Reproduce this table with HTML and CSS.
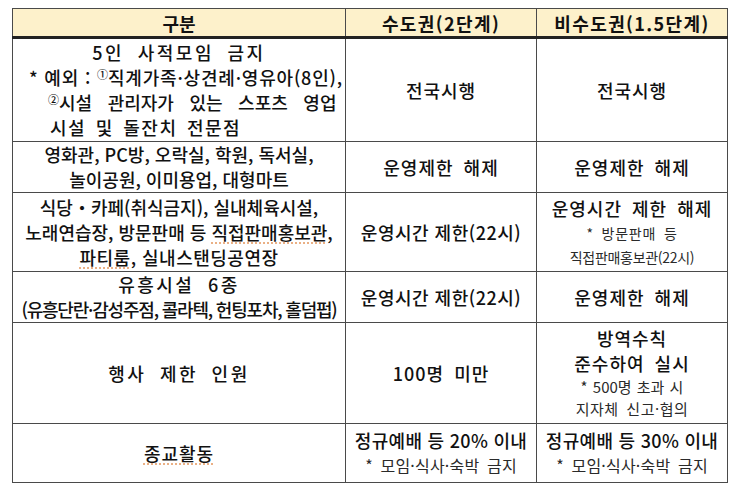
FILE: index.html
```html
<!DOCTYPE html>
<html lang="ko">
<head>
<meta charset="utf-8">
<link rel="stylesheet" href="styles.css">
</head>
<body>
<table class="rules">
  <colgroup>
    <col class="c1"><col class="c2"><col class="c3">
  </colgroup>
  <thead>
    <tr class="head">
      <th>구분</th>
      <th class="hw">수도권(2단계)</th>
      <th class="hw">비수도권(1.5단계)</th>
    </tr>
  </thead>
  <tbody>
    <tr class="r1">
      <td class="left">
        <div class="ln sp center">5인 사적모임 금지</div>
        <div class="ln ex1">* 예외 : <sup class="num">①</sup>직계가족·상견례·영유아(8인),</div>
        <div class="ln ex2"><sup class="num">②</sup>시설 관리자가 있는 스포츠 영업</div>
        <div class="ln ex3">시설 및 돌잔치 전문점</div>
      </td>
      <td><div class="ln sp1">전국시행</div></td>
      <td><div class="ln sp1">전국시행</div></td>
    </tr>
    <tr class="r2">
      <td>
        <div class="ln">영화관, PC방, 오락실, 학원, 독서실,</div>
        <div class="ln">놀이공원, 이미용업, 대형마트</div>
      </td>
      <td><div class="ln sp1">운영제한 해제</div></td>
      <td><div class="ln sp1">운영제한 해제</div></td>
    </tr>
    <tr class="r3">
      <td>
        <div class="ln">식당・카페(취식금지), 실내체육시설,</div>
        <div class="ln">노래연습장, 방문판매 등 <span class="spell">직접판매홍보관</span>,</div>
        <div class="ln wide"><span class="spell">파티룸</span>, 실내스탠딩공연장</div>
      </td>
      <td><div class="ln hours">운영시간 제한(22시)</div></td>
      <td>
        <div class="ln sp1">운영시간 제한 해제</div>
        <div class="ln small gap">* 방문판매 등</div>
        <div class="ln small">직접판매홍보관(22시)</div>
      </td>
    </tr>
    <tr class="r4">
      <td>
        <div class="ln sp">유흥시설 6종</div>
        <div class="ln cond">(유흥단란·감성주점, 콜라텍, 헌팅포차, 홀덤펍)</div>
      </td>
      <td><div class="ln hours">운영시간 제한(22시)</div></td>
      <td><div class="ln sp1">운영제한 해제</div></td>
    </tr>
    <tr class="r5">
      <td><div class="ln sp">행사 제한 인원</div></td>
      <td><div class="ln sp1">100명 미만</div></td>
      <td>
        <div class="ln sp1">방역수칙</div>
        <div class="ln sp1">준수하여 실시</div>
        <div class="ln small3 tight3">* 500명 초과 시</div>
        <div class="ln small3">지자체 신고·협의</div>
      </td>
    </tr>
    <tr class="r6">
      <td><div class="ln sp1"><span class="spell">종교활동</span></div></td>
      <td>
        <div class="ln cond2">정규예배 등 20% 이내</div>
        <div class="ln small2">* 모임·식사·숙박 금지</div>
      </td>
      <td>
        <div class="ln cond2">정규예배 등 30% 이내</div>
        <div class="ln small2">* 모임·식사·숙박 금지</div>
      </td>
    </tr>
  </tbody>
</table>
</body>
</html>
```

FILE: styles.css
```css
html, body {
  margin: 0;
  padding: 0;
  background: #ffffff;
}
body {
  padding: 8px 0 0 12px;
  font-family: "Noto Sans CJK KR", "Noto Sans", sans-serif;
  color: #111111;
}
.rules {
  border-collapse: collapse;
  table-layout: fixed;
  width: 715px;
}
.c1 { width: 333px; }
.c2 { width: 191px; }
.c3 { width: 191px; }
.rules th, .rules td {
  border: 1px solid #4a4a4a;
  text-align: center;
  vertical-align: middle;
  padding: 0;
}
.head th {
  background: #fdf1cb;
  font-weight: 700;
  font-size: 18px;
  line-height: 20px;
  height: 27px;
  border-bottom: 3px solid #222;
  letter-spacing: 0;
}
.head .hw { letter-spacing: 1.4px; }
.r1 td { height: 102px; }
.r2 td { height: 49px; }
.r3 td { height: 78px; }
.r4 td { height: 48px; }
.r5 td { height: 100px; }
.r6 td { height: 58px; }

.ln {
  font-size: 18px;
  font-weight: 500;
  line-height: 25px;
  white-space: nowrap;
  letter-spacing: 0;
}
.sp { letter-spacing: 2.5px; word-spacing: 6px; }
.sp1 { letter-spacing: 1px; word-spacing: 4px; }
.hours { letter-spacing: 0.5px; }
.wide { letter-spacing: 0.5px; }
.cond { letter-spacing: -1.2px; }
.cond2 { letter-spacing: 0.3px; }
.small { font-size: 14px; line-height: 24px; color: #2a2a2a; letter-spacing: -0.3px; font-weight: 400; }
.small.gap { letter-spacing: 0.8px; word-spacing: 3px; }
.small2 { font-size: 16px; line-height: 25px; color: #2a2a2a; letter-spacing: 0.2px; word-spacing: 3px; font-weight: 400; }
.small3 { font-size: 15px; line-height: 22px; color: #2a2a2a; letter-spacing: 0.5px; word-spacing: 3px; font-weight: 400; }
.small3.tight3 { letter-spacing: 0; word-spacing: 1px; }
.left .center { text-align: center; }
.ex1 { text-align: left; padding-left: 16px; letter-spacing: 0.8px; }
.ex2 { text-align: left; padding-left: 35px; word-spacing: 10.5px; }
.ex3 { text-align: left; padding-left: 37px; letter-spacing: 1.5px; word-spacing: 3px; }
.num {
  font-size: 11px;
  vertical-align: 6px;
  line-height: 0;
  letter-spacing: 0;
}
.spell {
  text-decoration: underline dotted #e8a878;
  text-underline-offset: 3px;
}
```
